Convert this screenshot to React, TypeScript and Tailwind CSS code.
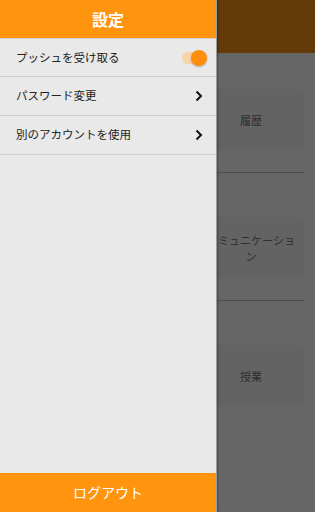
import React from 'react';

const font = { fontFamily: '"Noto Sans CJK JP", "Noto Sans", sans-serif' };

const Chevron = () => (
    <svg width="8" height="12" viewBox="0 0 8 12" className="shrink-0">
        <path d="M1.5 1.5 L6 6 L1.5 10.5" fill="none" stroke="#111" strokeWidth="2" />
    </svg>
);

export default function App() {
    const sections = ['履歴', 'コミュニケーション', '授業'];

    return (
        <div className="relative w-[315px] h-[512px] overflow-hidden bg-[#666666]" style={font}>
            {/* page behind the drawer */}
            <div className="h-[53px] bg-[#643a08]" />
            <div className="flex flex-col pt-[36px]">
                {sections.map((s, i) => (
                    <div key={s} className="flex flex-col">
                        <div className="flex justify-end pr-[10px]">
                            <div className="w-[108px] h-[61px] rounded-md bg-[#636363] flex items-center justify-center px-[6px] text-center text-[11px] leading-[16px] text-[#2e2e2e]">
                                {s}
                            </div>
                        </div>
                        {i < sections.length - 1 && (
                            <div className="mt-[22px] mb-[44px] mr-[11px] h-px bg-[#4e4e4e]" />
                        )}
                    </div>
                ))}
            </div>

            {/* drawer */}
            <div className="absolute left-0 top-0 w-[217px] h-full flex flex-col bg-[#e9e9e9] border-r border-[#9c9c9c] shadow-[1px_0_2px_rgba(0,0,0,0.3)]">
                <div className="h-[38px] shrink-0 bg-[#ff940f] flex items-center justify-center text-white font-bold text-[16px]">
                    設定
                </div>
                <div className="h-[39px] border-y border-[#d2d2d2] flex items-center justify-between pl-[16px] pr-[10px] text-[11.5px] text-[#222]">
                    <span>プッシュを受け取る</span>
                    <div className="relative w-[24px] h-[16px] flex items-center">
                        <div className="w-[22px] h-[12px] rounded-full bg-[#f7d3a6]" />
                        <div className="absolute right-[-1px] top-0 w-[16px] h-[16px] rounded-full bg-[#ff8e0c] shadow-[0_1px_2px_rgba(0,0,0,0.25)]" />
                    </div>
                </div>
                <div className="h-[39px] border-b border-[#d2d2d2] flex items-center justify-between pl-[16px] pr-[13px] text-[11.5px] text-[#222]">
                    <span>パスワード変更</span>
                    <Chevron />
                </div>
                <div className="h-[39px] border-b border-[#d2d2d2] flex items-center justify-between pl-[16px] pr-[13px] text-[11.5px] text-[#222]">
                    <span>別のアカウントを使用</span>
                    <Chevron />
                </div>
                <div className="flex-1" />
                <div className="h-[39px] shrink-0 bg-[#ff940f] flex items-center justify-center text-white text-[14px]">
                    ログアウト
                </div>
            </div>
        </div>
    );
}
